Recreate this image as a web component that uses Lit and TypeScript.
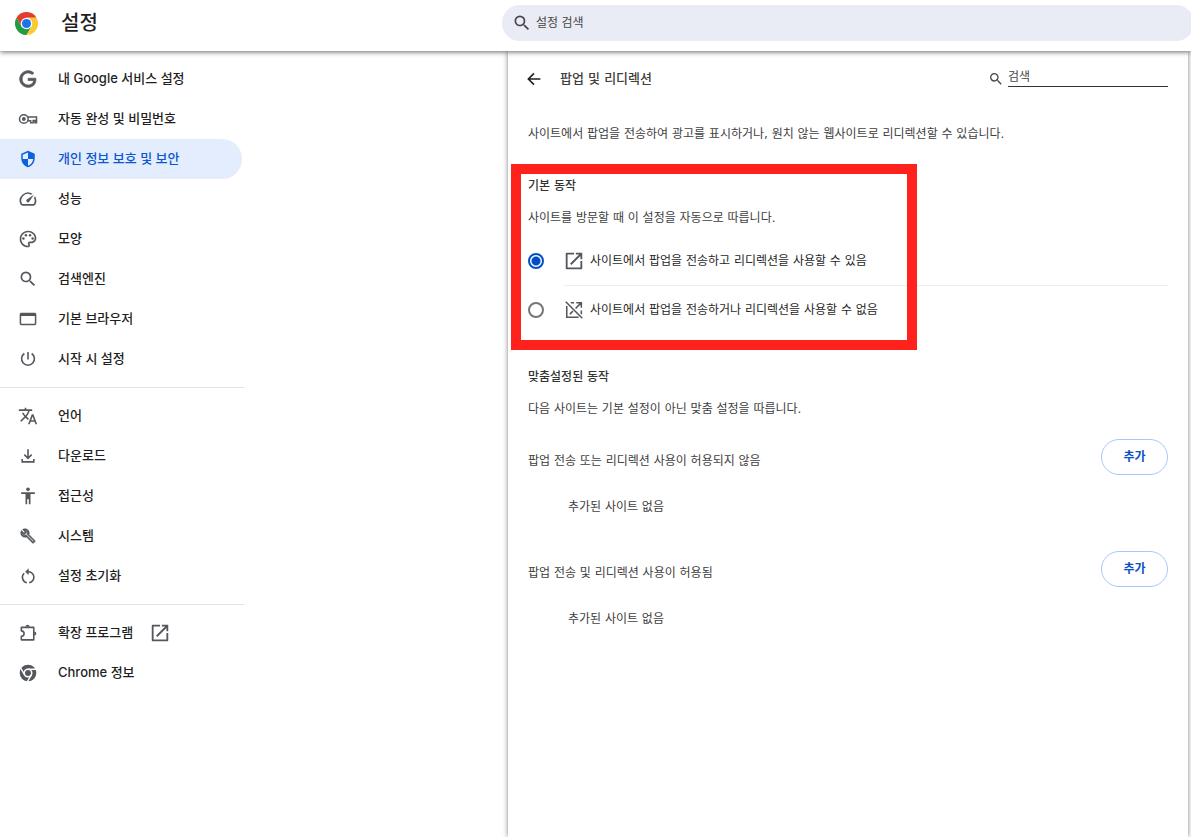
import { LitElement, html, css, svg } from "lit";
import { customElement, state } from "lit/decorators.js";
import { classMap } from "lit/directives/class-map.js";

const icons: Record<string, unknown> = {
  google: svg`<path stroke="currentColor" stroke-width=".9" d="M21.35 11.1H12.18V13.83H18.69C18.36 17.64 15.19 19.27 12.19 19.27C8.36 19.27 5 16.25 5 12C5 7.9 8.2 4.73 12.2 4.73C15.29 4.73 17.1 6.7 17.1 6.7L19 4.72C19 4.72 16.56 2 12.1 2C6.42 2 2.03 6.8 2.03 12C2.03 17.05 6.16 22 12.25 22C17.6 22 21.5 18.33 21.5 12.91C21.5 11.76 21.35 11.1 21.35 11.1Z"/>`,
  key: svg`<g fill="none" stroke="currentColor" stroke-width="1.8"><circle cx="7" cy="12" r="5.2"/><path d="M12 9.700H22.200v6.800h-1.800v-2.600h-2.200v2.600h-3v-2.300H12"/></g><circle cx="7" cy="12" r="2.300"/>`,
  shield: svg`<path d="M12 1L3 5v6c0 5.55 3.84 10.74 9 12 5.16-1.26 9-6.45 9-12V5l-9-4zm0 10.99h7c-.53 4.12-3.28 7.79-7 8.94V12H5V6.3l7-3.11v8.8z"/>`,
  speed: svg`<path d="M20.38 8.57l-1.23 1.85a8 8 0 0 1-.22 7.58H5.07A8 8 0 0 1 15.58 6.85l1.85-1.23A10 10 0 0 0 3.35 19a2 2 0 0 0 1.72 1h13.85a2 2 0 0 0 1.74-1 10 10 0 0 0-.27-10.44z"/><path d="M10.59 15.41a2 2 0 0 0 2.83 0l5.66-8.49-8.49 5.66a2 2 0 0 0 0 2.83z"/>`,
  palette: svg`<path d="M12 22C6.49 22 2 17.51 2 12S6.49 2 12 2s10 4.04 10 9c0 3.31-2.69 6-6 6h-1.77c-.28 0-.5.22-.5.5 0 .12.05.23.13.33.41.47.64 1.06.64 1.67 0 1.38-1.12 2.5-2.5 2.5zm0-18c-4.41 0-8 3.59-8 8s3.59 8 8 8c.28 0 .5-.22.5-.5 0-.16-.08-.28-.14-.35-.41-.46-.63-1.05-.63-1.65 0-1.38 1.12-2.5 2.5-2.5H16c2.21 0 4-1.79 4-4 0-3.86-3.59-7-8-7z"/><circle cx="6.5" cy="11.5" r="1.5"/><circle cx="9.5" cy="7.5" r="1.5"/><circle cx="14.5" cy="7.5" r="1.5"/><circle cx="17.5" cy="11.5" r="1.5"/>`,
  search: svg`<path d="M15.5 14h-.79l-.28-.27A6.471 6.471 0 0 0 16 9.5 6.5 6.5 0 1 0 9.5 16c1.61 0 3.09-.59 4.23-1.57l.27.28v.79l5 4.99L20.49 19l-4.99-5zm-6 0C7.01 14 5 11.99 5 9.5S7.01 5 9.5 5 14 7.01 14 9.5 11.99 14 9.5 14z"/>`,
  browser: svg`<path fill-rule="evenodd" d="M4 4.500h16a2 2 0 0 1 2 2v11a2 2 0 0 1-2 2H4a2 2 0 0 1-2-2v-11a2 2 0 0 1 2-2zM3.800 8.500V17.700h16.400V8.500z"/>`,
  power: svg`<path fill="none" stroke="currentColor" stroke-width="1.900" d="M12 3.500V12.500M7.600 5.400a7.700 7.700 0 1 0 8.800 0"/>`,
  translate: svg`<path d="M12.87 15.07l-2.54-2.51.03-.03A17.52 17.52 0 0 0 14.07 6H17V4h-7V2H8v2H1v1.99h11.17C11.5 7.92 10.44 9.75 9 11.35 8.07 10.32 7.3 9.19 6.69 8h-2c.73 1.63 1.73 3.17 2.98 4.56l-5.09 5.02L4 19l5-5 3.11 3.11.76-2.04zM18.5 10h-2L12 22h2l1.12-3h4.75L21 22h2l-4.5-12zm-2.62 7l1.62-4.33L19.12 17h-3.24z"/>`,
  download: svg`<path fill="none" stroke="currentColor" stroke-width="1.900" d="M12 4v10.500M7.600 10.400L12 14.800l4.400-4.400M5 15.500V19h14v-3.500"/>`,
  person: svg`<circle cx="12" cy="4" r="2.200"/><path d="M3.800 7.500h16.400v2H15V22h-2v-6h-2v6H9V9.500H3.800z"/>`,
  wrench: svg`<path stroke="currentColor" stroke-width=".7" d="M22.61 19L13.53 9.91C14.46 7.57 14 4.81 12.09 2.91C9.79.61 6.21.4 3.66 2.26L7.5 6.11L6.08 7.52L2.25 3.69C.39 6.23.6 9.82 2.9 12.11C4.76 13.97 7.47 14.46 9.79 13.59L18.9 22.7C19.29 23.09 19.92 23.09 20.31 22.7L22.61 20.4C23 20 23 19.39 22.61 19M19.61 20.59L9.15 10.13C8.54 10.58 7.85 10.85 7.12 10.95C6.11 11.1 5.04 10.78 4.27 10C3.63 9.37 3.3 8.54 3.3 7.71L6.09 10.5L10.5 6.11L7.71 3.31C8.54 3.31 9.37 3.64 10 4.27C10.79 5.06 11.1 6.14 10.94 7.17C10.83 7.91 10.54 8.58 10.06 9.17L20.5 19.61L19.61 20.59Z"/>`,
  reset: svg`<path fill="none" stroke="currentColor" stroke-width="1.900" d="M10.600 20A6.600 6.600 0 0 1 7.400 8.700M13.400 20A6.600 6.600 0 0 0 11.500 6.900"/><path d="M12.800 2.800v8L8.600 6.800z"/>`,
  extension: svg`<path fill="none" stroke="currentColor" stroke-width="1.900" stroke-linejoin="round" d="M4 5.200H18.900V20.200H4V16a3.300 3.300 0 0 0 0-6.600z"/><path d="M9 4.600a2.500 2.500 0 0 1 5 0zM19.500 10.200a2.500 2.500 0 0 1 0 5z"/>`,
  open: svg`<path d="M19 19H5V5h7V3H4a1 1 0 0 0-1 1v16a1 1 0 0 0 1 1h16a1 1 0 0 0 1-1v-8h-2zM14 3v2h3.590l-9.830 9.830 1.410 1.410L19 6.410V10h2V3z"/>`,
  blocked: svg`<path fill="none" stroke="currentColor" stroke-width="1.700" d="M3 3L21 21M4.100 7.500V20H17M8.500 4H12M14.500 4H20V9.500M20 12.500v4M20 4l-6.300 6.300M10.800 13.200l-3.300 3.300"/>`,
  chrome: svg`<circle cx="12" cy="12" r="10"/><circle cx="12" cy="12" r="5.400" fill="#fff"/><circle cx="12" cy="12" r="3.600"/><path id="cut" fill="none" stroke="#fff" stroke-width="1.700" d="M12 7.400H22.500M16 14.300L10.700 23.400M8 14.300L2.700 5.200"/>`,
  back: svg`<path fill="none" stroke="currentColor" stroke-width="2.200" d="M20.500 12H5M12 4.500L4.500 12l7.500 7.500"/>`,
};

const icon = (name: string, cls = "i20") =>
  html`<svg class="icon ${cls}" viewBox="0 0 24 24" fill="currentColor" aria-hidden="true">${icons[name]}</svg>`;

interface Item { icon: string; label: string; size?: string; external?: boolean }

const groups: Item[][] = [
  [
    { icon: "google", label: "내 Google 서비스 설정" },
    { icon: "key", label: "자동 완성 및 비밀번호" },
    { icon: "shield", label: "개인 정보 보호 및 보안", size: "i18" },
    { icon: "speed", label: "성능" },
    { icon: "palette", label: "모양" },
    { icon: "search", label: "검색엔진" },
    { icon: "browser", label: "기본 브라우저" },
    { icon: "power", label: "시작 시 설정" },
  ],
  [
    { icon: "translate", label: "언어" },
    { icon: "download", label: "다운로드" },
    { icon: "person", label: "접근성" },
    { icon: "wrench", label: "시스템", size: "i16" },
    { icon: "reset", label: "설정 초기화" },
  ],
  [
    { icon: "extension", label: "확장 프로그램", external: true },
    { icon: "chrome", label: "Chrome 정보" },
  ],
];

const options = [
  { id: "allow", icon: "open", label: "사이트에서 팝업을 전송하고 리디렉션을 사용할 수 있음" },
  { id: "block", icon: "blocked", label: "사이트에서 팝업을 전송하거나 리디렉션을 사용할 수 없음" },
];

const siteLists = ["팝업 전송 또는 리디렉션 사용이 허용되지 않음", "팝업 전송 및 리디렉션 사용이 허용됨"];

const shared = css`
  * { box-sizing: border-box; }
  .icon { display: block; flex: none; }
  .i16 { width: 16px; height: 16px; }
  .i18 { width: 18px; height: 18px; }
  .i20 { width: 20px; height: 20px; }
  .i22 { width: 22px; height: 22px; }
`;

@customElement("settings-menu")
class SettingsMenu extends LitElement {
  static styles = [shared, css`
    :host { display: block; width: 244px; padding-top: 8px; }
    .group + .group { margin-top: 8px; padding-top: 8px; border-top: 1px solid #e3e3e3; }
    .item {
      display: flex; align-items: center; height: 40px; margin-right: 2px;
      border-radius: 0 20px 20px 0; color: #1f1f1f; font-size: 13px; font-weight: 500;
      line-height: 20px; text-decoration: none;
    }
    .label { padding-bottom: 2px; }
    .slot { display: flex; justify-content: center; width: 20px; margin: 0 20px 0 18px; color: #54585d; }
    .external { margin-left: 16px; color: #54585d; }
    .selected { background: #e4edfd; color: #0b57d0; }
    .selected .slot { color: #0b62dc; }
  `];
  @state() private selected = "shield";

  private pick(e: Event, id: string) {
    e.preventDefault();
    this.selected = id;
  }

  render() {
    return html`<nav aria-label="설정">
      ${groups.map((group) => html`<div class="group">
        ${group.map((it) => html`<a href="#${it.icon}" @click=${(e: Event) => this.pick(e, it.icon)}
          class=${classMap({ item: true, selected: it.icon === this.selected })}>
          <span class="slot">${icon(it.icon, it.size)}</span><span class="label">${it.label}</span>${it.external
            ? html`<span class="external">${icon("open", "i22")}</span>` : ""}</a>`)}
      </div>`)}
    </nav>`;
  }
}

@customElement("popup-settings")
class PopupSettings extends LitElement {
  static styles = [shared, css`
    :host {
      display: block; padding: 0 20px; color: #404040; font-size: 12px; line-height: 20px;
      font-family: "DejaVu Sans", "Noto Sans CJK KR", sans-serif;
    }
    h1, h2, h3, p { margin: 0; font-size: 12px; line-height: 20px; font-weight: 400; }
    .head { display: flex; align-items: center; height: 56px; }
    .back { display: flex; width: 20px; padding: 0; margin-left: -4px; border: 0; background: none; color: #1f1f1f; }
    .back .icon { margin-left: 1px; width: 18px; }
    .head h1 { margin-left: 16px; font-size: 13px; font-weight: 500; flex: 1; }
    .find { display: flex; align-items: center; gap: 4px; color: #474747; }
    .find input {
      width: 160px; height: 20px; padding: 0; margin-bottom: 4px; border: 0; border-bottom: 1px solid #333;
      background: none; outline: none; font: inherit; color: inherit;
    }
    input::placeholder { color: #474747; opacity: 1; }
    .intro { padding: 17px 0 24px; }
    .section { position: relative; }
    .frame { position: absolute; top: -4px; left: -17px; width: 406px; bottom: -16px; border: 10px solid #ff221c; pointer-events: none; }
    h2 { font-weight: 500; color: #333; padding: 8px 0; line-height: 20px; }
    .sub { padding: 4px 0; }
    .option { display: flex; align-items: center; height: 48px; color: #1f1f1f; }
    .options { display: grid; padding-top: 5px; }
    .rule { height: 1px; margin-left: 36px; background: #ececec; }
    .radio {
      appearance: none; width: 16px; height: 16px; margin: 0 19px 0 0; flex: none;
      border: 2px solid #747775; border-radius: 50%; background: #fff;
    }
    .radio:checked { border-color: #004fc4; background: radial-gradient(circle, #004fc4 0 4px, #fff 5px); }
    .option .icon { margin-right: 5px; color: #54585d; }
    .custom { padding-top: 25px; }
    .list { padding-top: 16px; }
    .list + .list { padding-top: 24px; }
    .row { display: flex; align-items: center; justify-content: space-between; }
    .row h3 { padding-top: 8px; }
    .add {
      width: 67px; height: 36px; padding: 0; border: 1px solid #a8c7fa; border-radius: 18px;
      background: #fff; color: #0b50c4; font: inherit; font-weight: 700;
    }
    .empty { padding: 22px 0 10px 40px; }
  `];
  @state() private choice = "allow";

  render() {
    return html`
      <div class="head">
        <button class="back" aria-label="뒤로">${icon("back")}</button>
        <h1>팝업 및 리디렉션</h1>
        <label class="find">${icon("search", "i16")}<input type="search" placeholder="검색" aria-label="검색" /></label>
      </div>
      <p class="intro">사이트에서 팝업을 전송하여 광고를 표시하거나, 원치 않는 웹사이트로 리디렉션할 수 있습니다.</p>
      <section class="section">
        <h2>기본 동작</h2>
        <p class="sub">사이트를 방문할 때 이 설정을 자동으로 따릅니다.</p>
        <div class="options">
          ${options.map((o, n) => html`${n ? html`<div class="rule"></div>` : ""}
            <label class="option"><input class="radio" type="radio" name="behavior"
              .checked=${this.choice === o.id} @change=${() => (this.choice = o.id)} />${icon(o.icon, "i22")}<span>${o.label}</span></label>`)}
        </div>
        <div class="frame"></div>
      </section>
      <section class="custom">
        <h2>맞춤설정된 동작</h2>
        <p class="sub">다음 사이트는 기본 설정이 아닌 맞춤 설정을 따릅니다.</p>
        ${siteLists.map((name) => html`<div class="list">
          <div class="row"><h3>${name}</h3><button class="add">추가</button></div>
          <p class="empty">추가된 사이트 없음</p>
        </div>`)}
      </section>`;
  }
}

@customElement("app-root")
class AppRoot extends LitElement {
  static styles = [shared, css`
    :host {
      display: flex; flex-direction: column; min-height: 100vh; overflow: hidden; background: #fff;
      font-family: Inter, "Noto Sans CJK KR", sans-serif; color: #1f1f1f;
    }
    .bar {
      position: relative; z-index: 1; display: grid; grid-template-columns: 1fr 689px; height: 51px;
      background: #fff; box-shadow: 0 1px 5px rgba(0, 0, 0, .6);
    }
    .brand { display: flex; align-items: center; gap: 23px; height: 46px; padding-left: 15px; }
    .logo { width: 23px; height: 23px; }
    .title { margin: 0; font-size: 20px; line-height: 28px; font-weight: 500; }
    .search {
      display: flex; align-items: center; gap: 4px; height: 36px; margin: 5px -3px 0 0; padding-left: 10px;
      border-radius: 18px; background: #e9ebf5; color: #474747;
    }
    .search input {
      flex: 1; min-width: 0; height: 28px; padding: 0 0 2px; border: 0; outline: none; background: none;
      font: inherit; font-size: 12px; color: inherit;
    }
    .search input::placeholder { color: #474747; opacity: 1; }
    .body { flex: 1; display: grid; grid-template-columns: 1fr 680px; padding-right: 3px; }
    .panel { box-shadow: 0 0 5px rgba(0, 0, 0, .5); }
  `];

  render() {
    return html`
      <header class="bar">
        <div class="brand">
          <svg class="logo" viewBox="0 0 48 48" aria-hidden="true">
            <path fill="#e33b2e" d="M3.200 12A24 24 0 0 1 44.800 12H24L13.600 30z"/>
            <path fill="#249a41" d="M3.200 12A24 24 0 0 0 24 48L34.400 30 24 34 13.600 30z"/>
            <path fill="#fcc934" d="M44.800 12A24 24 0 0 1 24 48L34.400 30 24 12z"/>
            <circle cx="24" cy="24" r="12" fill="#fff"/><circle cx="24" cy="24" r="9.500" fill="#1a73e8"/>
          </svg>
          <h1 class="title">설정</h1>
        </div>
        <label class="search">${icon("search")}<input type="search" placeholder="설정 검색" aria-label="설정 검색" /></label>
      </header>
      <div class="body">
        <settings-menu></settings-menu>
        <main class="panel"><popup-settings></popup-settings></main>
      </div>`;
  }
}
